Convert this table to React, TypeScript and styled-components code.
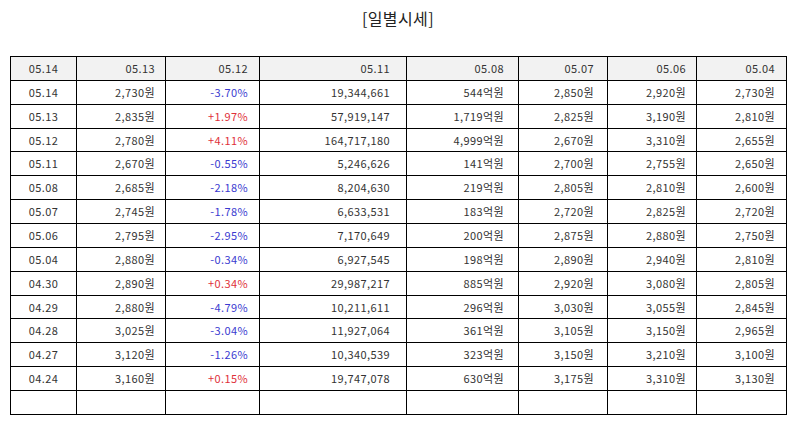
import React from 'react';
import styled, { createGlobalStyle } from 'styled-components';

const GlobalStyle = createGlobalStyle`
  html, body {
    margin: 0;
    padding: 0;
    background: #ffffff;
  }
  body {
    font-family: "Noto Sans CJK KR", "Noto Sans", sans-serif;
    color: #333333;
  }
`;

const header = ['05.14', '05.13', '05.12', '05.11', '05.08', '05.07', '05.06', '05.04'];

const rows: string[][] = [
  ['05.14', '2,730원', '-3.70%', '19,344,661', '544억원', '2,850원', '2,920원', '2,730원'],
  ['05.13', '2,835원', '+1.97%', '57,919,147', '1,719억원', '2,825원', '3,190원', '2,810원'],
  ['05.12', '2,780원', '+4.11%', '164,717,180', '4,999억원', '2,670원', '3,310원', '2,655원'],
  ['05.11', '2,670원', '-0.55%', '5,246,626', '141억원', '2,700원', '2,755원', '2,650원'],
  ['05.08', '2,685원', '-2.18%', '8,204,630', '219억원', '2,805원', '2,810원', '2,600원'],
  ['05.07', '2,745원', '-1.78%', '6,633,531', '183억원', '2,720원', '2,825원', '2,720원'],
  ['05.06', '2,795원', '-2.95%', '7,170,649', '200억원', '2,875원', '2,880원', '2,750원'],
  ['05.04', '2,880원', '-0.34%', '6,927,545', '198억원', '2,890원', '2,940원', '2,810원'],
  ['04.30', '2,890원', '+0.34%', '29,987,217', '885억원', '2,920원', '3,080원', '2,805원'],
  ['04.29', '2,880원', '-4.79%', '10,211,611', '296억원', '3,030원', '3,055원', '2,845원'],
  ['04.28', '3,025원', '-3.04%', '11,927,064', '361억원', '3,105원', '3,150원', '2,965원'],
  ['04.27', '3,120원', '-1.26%', '10,340,539', '323억원', '3,150원', '3,210원', '3,100원'],
  ['04.24', '3,160원', '+0.15%', '19,747,078', '630억원', '3,175원', '3,310원', '3,130원'],
];

const colWidths = [66, 89, 94, 147, 112, 89, 89, 90];
const padRight = [4, 10, 11, 16, 14, 13, 10, 11];

const Page = styled.div`
  padding: 0 8px 0 10px;
`;

const Title = styled.h2`
  margin: 0;
  height: 56px;
  padding-top: 6px;
  box-sizing: border-box;
  text-align: center;
  font-size: 16px;
  font-weight: 400;
  color: #222222;
  letter-spacing: 0.4px;
`;

const Table = styled.table`
  width: 776px;
  border-collapse: collapse;
  table-layout: fixed;
  border: 1px solid #000000;
  font-size: 11px;
  letter-spacing: 0.4px;
`;

const Cell = styled.td<{ $head?: boolean; $center?: boolean; $pad: number; $tone?: 'up' | 'down' }>`
  height: 23.87px;
  padding: 0 ${(p) => p.$pad}px 0 4px;
  box-sizing: border-box;
  border: 1px solid #000000;
  background: ${(p) => (p.$head ? '#f2f2f2' : '#ffffff')};
  text-align: ${(p) => (p.$center ? 'center' : 'right')};
  color: ${(p) => (p.$tone === 'up' ? '#e0303a' : p.$tone === 'down' ? '#3a3ad0' : '#333333')};
  white-space: nowrap;
  line-height: 1;
`;

const toneOf = (v: string, idx: number) => {
  if (idx !== 2) return undefined;
  return v.startsWith('+') ? 'up' : 'down';
};

export default function App() {
  return (
    <Page>
      <GlobalStyle />
      <Title>[일별시세]</Title>
      <Table>
        <colgroup>
          {colWidths.map((w, i) => (
            <col key={i} style={{ width: w }} />
          ))}
        </colgroup>
        <tbody>
          <tr>
            {header.map((h, i) => (
              <Cell key={i} $head $center={i === 0} $pad={padRight[i]}>{h}</Cell>
            ))}
          </tr>
          {rows.map((r, ri) => (
            <tr key={ri}>
              {r.map((v, i) => (
                <Cell key={i} $center={i === 0} $pad={padRight[i]} $tone={toneOf(v, i)}>{v}</Cell>
              ))}
            </tr>
          ))}
          <tr>
            {header.map((_, i) => (
              <Cell key={i} $pad={padRight[i]} />
            ))}
          </tr>
        </tbody>
      </Table>
    </Page>
  );
}
